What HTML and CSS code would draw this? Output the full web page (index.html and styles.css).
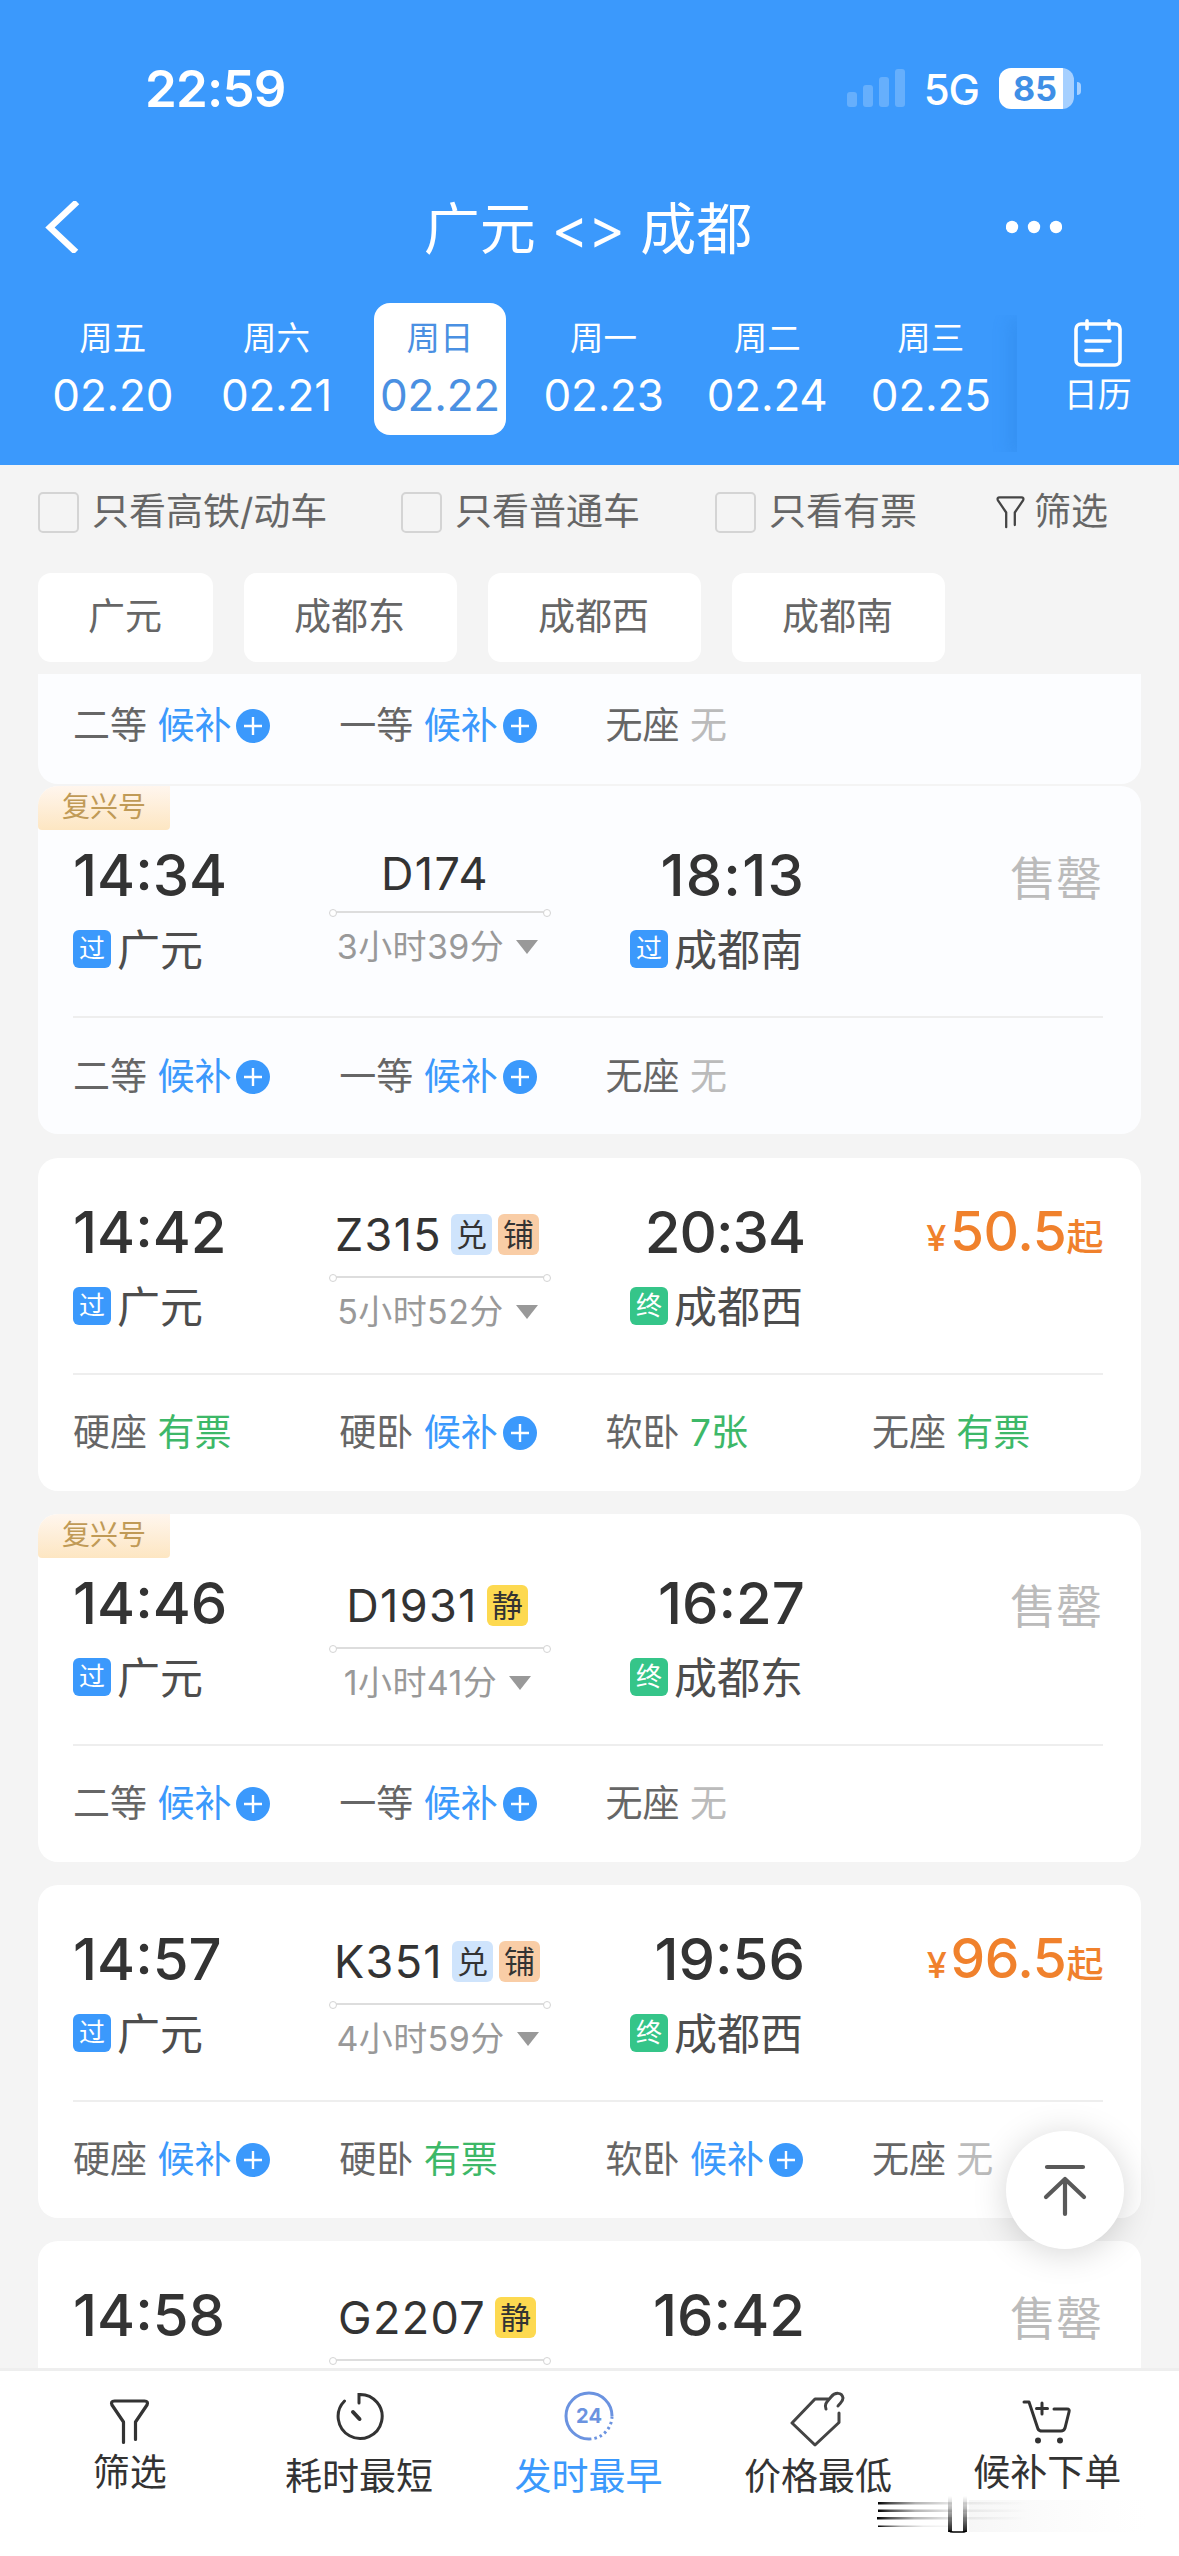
FILE: index.html
```html
<!DOCTYPE html>
<html lang="zh-CN">
<head>
<meta charset="utf-8">
<title>广元 - 成都</title>
<link rel="stylesheet" href="styles.css">
</head>
<body>
<svg class="defs" width="0" height="0">
  <symbol id="plus" viewBox="0 0 34 34"><circle cx="17" cy="17" r="17" fill="#3b99fc"/><path d="M8 17h18M17 8v18" stroke="#fff" stroke-width="2.4"/></symbol>
  <symbol id="funnel" viewBox="0 0 40 46"><path d="M14 43.500V23L2.500 6Q.8 2 5 2h30q4.200 0 2.500 4L26 23v17.500" fill="none" stroke="currentColor" stroke-width="3.200" stroke-linecap="round" stroke-linejoin="round"/></symbol>
</svg>
<div class="screen">
  <header class="header">
    <div class="status">
      <span class="clock">22:59</span>
      <div class="status-right">
        <svg class="signal" width="59" height="38" viewBox="0 0 59 38" fill="#fff" fill-opacity=".22"><rect x="0" y="23" width="10" height="15" rx="3"/><rect x="16" y="16" width="10" height="22" rx="3"/><rect x="32" y="8" width="10" height="30" rx="3"/><rect x="48" y="0" width="10" height="38" rx="3"/></svg>
        <span class="net">5G</span>
        <div class="battery"><span>85</span></div>
        <i class="nub"></i>
      </div>
    </div>
    <nav class="nav">
      <svg class="back" width="37" height="52" viewBox="0 0 37 52"><path d="M32 1 5 26.500 31 51" fill="none" stroke="#fff" stroke-width="6.500"/></svg>
      <h1>广元 <span>&lt;&gt;</span> 成都</h1>
      <svg class="more" width="56" height="14" viewBox="0 0 56 14" fill="#fff"><circle cx="6" cy="7" r="6.200"/><circle cx="28" cy="7" r="6.200"/><circle cx="50" cy="7" r="6.200"/></svg>
    </nav>
    <div class="dates">
      <div class="day"><span>周五</span><b>02.20</b></div>
      <div class="day"><span>周六</span><b>02.21</b></div>
      <div class="day on"><span>周日</span><b>02.22</b></div>
      <div class="day"><span>周一</span><b>02.23</b></div>
      <div class="day"><span>周二</span><b>02.24</b></div>
      <div class="day"><span>周三</span><b>02.25</b></div>
      <div class="calendar">
        <svg width="48" height="48" viewBox="0 0 48 48" fill="none" stroke="#fff" stroke-width="3.600" stroke-linecap="round"><rect x="2" y="5" width="44" height="41" rx="5"/><path d="M13 1.800v8M35 1.800v8M12 22h24M12 31.500h16"/></svg>
        <span>日历</span>
      </div>
    </div>
  </header>

  <section class="filters">
    <label class="opt o1"><i></i>只看高铁/动车</label>
    <label class="opt o2"><i></i>只看普通车</label>
    <label class="opt o3"><i></i>只看有票</label>
    <span class="sift"><svg width="29" height="33"><use href="#funnel"/></svg>筛选</span>
  </section>
  <section class="chips"><span>广元</span><span>成都东</span><span>成都西</span><span>成都南</span></section>

  <main class="list">
    <article class="card dim cut">
      <div class="seats">
        <div>二等 <em>候补</em><svg><use href="#plus"/></svg></div>
        <div>一等 <em>候补</em><svg><use href="#plus"/></svg></div>
        <div>无座 <s>无</s></div>
      </div>
    </article>

    <article class="card dim fx first">
      <span class="ribbon">复兴号</span>
      <div class="trip">
        <div class="dep"><time>14:34</time><p><i class="pass">过</i><span>广元</span></p></div>
        <div class="mid"><div class="no">D174</div><div class="rail"></div><div class="dur">3小时39分<i></i></div></div>
        <div class="arr"><time class="loose">18:13</time><p><i class="pass">过</i><span>成都南</span></p></div>
        <div class="sold">售罄</div>
      </div>
      <div class="seats">
        <div>二等 <em>候补</em><svg><use href="#plus"/></svg></div>
        <div>一等 <em>候补</em><svg><use href="#plus"/></svg></div>
        <div>无座 <s>无</s></div>
      </div>
    </article>

    <article class="card">
      <div class="trip">
        <div class="dep"><time>14:42</time><p><i class="pass">过</i><span>广元</span></p></div>
        <div class="mid"><div class="no tagged">Z315<i class="dui">兑</i><i class="pu">铺</i></div><div class="rail"></div><div class="dur">5小时52分<i></i></div></div>
        <div class="arr"><time class="tight">20:34</time><p><i class="end">终</i><span>成都西</span></p></div>
        <div class="price"><small>¥</small>50.5<span>起</span></div>
      </div>
      <div class="seats">
        <div>硬座 <u>有票</u></div>
        <div>硬卧 <em>候补</em><svg><use href="#plus"/></svg></div>
        <div>软卧 <u>7张</u></div>
        <div>无座 <u>有票</u></div>
      </div>
    </article>

    <article class="card fx">
      <span class="ribbon">复兴号</span>
      <div class="trip">
        <div class="dep"><time>14:46</time><p><i class="pass">过</i><span>广元</span></p></div>
        <div class="mid"><div class="no tagged">D1931<i class="jing">静</i></div><div class="rail"></div><div class="dur">1小时41分<i></i></div></div>
        <div class="arr"><time>16:27</time><p><i class="end">终</i><span>成都东</span></p></div>
        <div class="sold">售罄</div>
      </div>
      <div class="seats">
        <div>二等 <em>候补</em><svg><use href="#plus"/></svg></div>
        <div>一等 <em>候补</em><svg><use href="#plus"/></svg></div>
        <div>无座 <s>无</s></div>
      </div>
    </article>

    <article class="card">
      <div class="trip">
        <div class="dep"><time>14:57</time><p><i class="pass">过</i><span>广元</span></p></div>
        <div class="mid"><div class="no tagged">K351<i class="dui">兑</i><i class="pu">铺</i></div><div class="rail"></div><div class="dur">4小时59分<i></i></div></div>
        <div class="arr"><time>19:56</time><p><i class="end">终</i><span>成都西</span></p></div>
        <div class="price"><small>¥</small>96.5<span>起</span></div>
      </div>
      <div class="seats">
        <div>硬座 <em>候补</em><svg><use href="#plus"/></svg></div>
        <div>硬卧 <u>有票</u></div>
        <div>软卧 <em>候补</em><svg><use href="#plus"/></svg></div>
        <div>无座 <s>无</s></div>
      </div>
    </article>

    <article class="card">
      <div class="trip">
        <div class="dep"><time>14:58</time></div>
        <div class="mid"><div class="no tagged">G2207<i class="jing">静</i></div><div class="rail"></div></div>
        <div class="arr"><time>16:42</time></div>
        <div class="sold">售罄</div>
      </div>
    </article>
  </main>

  <footer class="tabs">
    <div class="tab up"><svg width="41" height="46"><use href="#funnel"/></svg><span>筛选</span></div>
    <div class="tab"><svg width="50" height="50" viewBox="0 0 50 50" fill="none" stroke="#333" stroke-width="3" stroke-linecap="round"><path d="M25 12V3.500a22 22 0 1 1-14.500 6.500"/><path d="M19 21l6.500 7" stroke-width="4"/></svg><span>耗时最短</span></div>
    <div class="tab on"><svg width="50" height="50" viewBox="0 0 50 50" fill="none" stroke="#6b93e0" stroke-width="3"><path d="M48 25A23 23 0 1 0 25 48"/><path d="M25 48A23 23 0 0 0 48 25" stroke-dasharray="2.500 3"/><text x="25" y="32" text-anchor="middle" class="n24">24</text></svg><span>发时最早</span></div>
    <div class="tab"><svg width="56" height="56" viewBox="0 0 56 56" fill="none" stroke="#444" stroke-width="3" stroke-linecap="round" stroke-linejoin="round"><path d="M38 8H25L2 32 25 54 49 31.500V22"/><path d="M36 18c-2-5 1-7 5-12 4-5 11-5 12 1 0 4-3 5-5 8"/></svg><span>价格最低</span></div>
    <div class="tab up"><svg width="50" height="46" viewBox="0 0 50 46" fill="none" stroke="#333" stroke-width="3" stroke-linecap="round" stroke-linejoin="round"><path d="M2 3h5l9 27q1 2 4 2h19q3 0 4-3l4-16q1-3-2-3H32"/><path d="M20 4v11M14.500 9.500h11"/><g fill="#333" stroke="none"><circle cx="16" cy="41.500" r="3"/><circle cx="38" cy="41.500" r="3"/></g></svg><span>候补下单</span></div>
  </footer>

  <button class="totop"><svg width="46" height="54" viewBox="0 0 46 54" fill="none" stroke="#595959" stroke-width="4.200" stroke-linecap="round" stroke-linejoin="round"><path d="M5 4h36M23 51V16M4 34 23 16l19 18"/></svg></button>
  <svg class="streaks" width="270" height="44" viewBox="0 0 270 44">
    <defs>
      <linearGradient id="h"><stop offset="0"/><stop offset=".08" stop-opacity=".7"/><stop offset=".25" stop-opacity=".3"/><stop offset=".5" stop-opacity=".08"/><stop offset="1" stop-opacity="0"/></linearGradient>
      <linearGradient id="v" x2="0" y2="1"><stop offset="0" stop-opacity="0"/><stop offset=".5" stop-opacity=".4"/><stop offset="1" stop-opacity=".9"/></linearGradient>
      <linearGradient id="g"><stop offset="0" stop-color="#ddd" stop-opacity=".25"/><stop offset="1" stop-color="#eee" stop-opacity="0"/></linearGradient>
    </defs>
    <rect x="92" y="6" width="178" height="32" fill="url(#g)"/>
    <g fill="url(#h)"><rect x="1" y="8" width="150" height="2.500"/><rect x="1" y="15.500" width="150" height="2.500"/><rect x="0" y="23" width="150" height="2.500"/><rect x="1" y="31.500" width="90" height="1.500"/></g>
    <rect x="75" y="6" width="11" height="32" fill="#fff"/>
    <rect x="71" y="2" width="4" height="36" fill="url(#v)"/><rect x="86" y="2" width="4" height="36" fill="url(#v)"/>
    <path d="M72 36.500q1 1.500 4 1.500h9q4 0 4-1.500" fill="none" stroke="#000" stroke-width="1.600"/>
  </svg>
</div>
</body>
</html>
```
FILE: styles.css
```css
* { box-sizing: border-box; margin: 0; padding: 0; }
body { width: 1179px; height: 2556px; overflow: hidden; background: #f4f4f4; }
i, em { font-style: normal; }
s, u { text-decoration: none; }
.defs { position: absolute; }
.screen {
  position: relative; display: flex; flex-direction: column;
  width: 1179px; height: 2556px;
  font-family: Inter, "Noto Sans CJK SC", sans-serif; font-size: 37px; color: #333;
}

/* header */
.header { height: 465px; flex: none; background: #3b99fc; color: #fff; }
.status { display: flex; height: 176px; align-items: center; justify-content: space-between; padding: 0 98px 0 145px; }
.clock { font-size: 51px; font-weight: 600; letter-spacing: -0.8px; }
.status-right { display: flex; align-items: center; }
.net { margin: 2px 20px 0 18px; font-size: 42px; font-weight: 500; letter-spacing: -1px; }
.battery {
  width: 75px; height: 41px; border-radius: 12px; padding-right: 3px;
  background: linear-gradient(90deg, #fff 64px, #a6d0ff 64px);
  color: #3f8fe6; font-size: 34px; font-weight: 700; line-height: 42px; text-align: center;
}
.nub { width: 4px; height: 13px; margin-left: 3px; border-radius: 0 5px 5px 0; background: #a6d0ff; }
.nav { display: flex; height: 102px; align-items: center; padding: 0 117px 0 45px; }
.nav h1 { flex: 1; margin: 4px 0 0 88px; font-size: 56px; font-weight: 400; line-height: 80px; text-align: center; white-space: pre; }
.nav h1 span { font-size: 56px; letter-spacing: -0.5px; }
.dates { display: grid; grid-template-columns: repeat(6, 163.6px) 1fr; margin-top: 25px; padding-left: 31px; }
.day { justify-self: center; width: 132px; height: 132px; padding-top: 14px; border-radius: 16px; text-align: center; }
.day span { display: block; font-size: 33.500px; line-height: 42px; }
.day b { display: block; margin: 6px -10px 0; font-size: 44px; font-weight: 400; line-height: 60px; letter-spacing: -0.2px; }
.day.on { background: #fff; color: #4a90e2; }
.calendar {
  display: flex; flex-direction: column; align-items: center; height: 137px; margin: 12px 0 0 4px; padding-top: 4px;
  box-shadow: -8px 4px 16px rgba(30, 110, 200, .18); font-size: 34px; clip-path: inset(0 0 0 -30px);
}
.calendar span { line-height: 44px; margin-top: 6px; }

/* filters */
.filters { display: flex; height: 94px; flex: none; align-items: center; padding-left: 38px; color: #666; line-height: 44px; white-space: nowrap; }
.opt { display: flex; align-items: center; }
.opt i { width: 41px; height: 41px; margin-right: 13px; border: 2px solid #d4d4d4; border-radius: 5px; }
.o1 { width: 363px; }
.o2 { width: 314px; }
.o3 { width: 281px; }
.sift { display: flex; align-items: center; gap: 9px; }
.sift svg { color: #444; }
.chips { display: flex; gap: 31px; height: 115px; flex: none; padding: 14px 38px 12px; color: #666; }
.chips span { height: 89px; padding: 0 52px 0 50px; border-radius: 13px; background: #fff; line-height: 88px; }
.chips span:first-child { padding: 0 51px 0 50px; }

/* train cards */
.list { flex: 1; min-height: 0; overflow: hidden; padding: 0 38px; }
.card { position: relative; height: 333px; margin-bottom: 23px; padding: 0 38px 0 35px; border-radius: 20px; background: #fff; overflow: hidden; }
.card.dim { background: #fcfdff; }
.card.cut { height: 110px; margin-bottom: 2px; border-radius: 0 0 20px 20px; }
.card.cut .seats { height: 102px; border: 0; }
.card.fx { height: 348px; padding-top: 15px; }
.card.first { margin-bottom: 24px; }
.ribbon {
  position: absolute; left: 0; top: 0; width: 132px; height: 44px; border-radius: 0 0 4px 4px;
  background: linear-gradient(#fff6ee, #fde6c2); color: #c09a56; font-size: 28px; line-height: 43px; text-align: center;
}
.trip { display: grid; grid-template-columns: 257px 220px 1fr 300px; height: 215px; }
.dep, .arr { padding-top: 40px; }
time { display: block; font-size: 58px; font-weight: 500; line-height: 69px; letter-spacing: 0; }
time.loose { letter-spacing: 1.2px; }
time.tight { letter-spacing: -1px; }
.dep p, .arr p { display: flex; align-items: center; margin-top: 18px; font-size: 43px; line-height: 40px; color: #4d4d4d; }
.dep p span, .arr p span { padding-top: 2px; }
.arr { justify-self: end; text-align: right; }
.arr time { margin-right: -2px; }
.arr p { justify-content: flex-end; }
.pass, .end { width: 38px; height: 38px; margin-right: 6px; border-radius: 6px; background: #3b99fc; color: #fff; font-size: 26px; line-height: 38px; text-align: center; }
.end { background: #35c589; }
.mid { padding-top: 46px; }
.no { display: flex; height: 53px; align-items: center; justify-content: center; padding-right: 10px; font-size: 45px; font-weight: 400; letter-spacing: 1.3px; }
.no.tagged { height: 61px; padding-right: 6px; }
.no i { width: 41px; height: 41px; margin-left: 6px; border-radius: 6px; font-size: 31px; line-height: 41px; letter-spacing: 0; text-align: center; }
.no i:first-child { margin-left: 9px; }
.dui { background: #cfe4fc; }
.pu { background: #f9cda6; }
.jing { background: #fdd950; }
.rail { position: relative; height: 2px; margin: 11px 0 14px; background: #ddd; }
.rail::before, .rail::after { content: ""; position: absolute; top: -2px; left: -1px; width: 6px; height: 6px; border: 1.500px solid #d4d4d4; border-radius: 50%; background: #fff; }
.rail::after { left: auto; right: -1px; }
.dur { display: flex; align-items: center; justify-content: center; padding-right: 5px; font-size: 34px; line-height: 40px; letter-spacing: 0.4px; color: #999; white-space: nowrap; }
.dur i { margin-left: 12px; border: 11px solid transparent; border-top: 14px solid #999; border-bottom: 0; }
.sold { padding: 50px 1px 0 0; font-size: 46px; line-height: 54px; text-align: right; color: #bbb; }
.price { padding-top: 39px; font-size: 55px; font-weight: 500; line-height: 68px; text-align: right; color: #f0812c; white-space: nowrap; letter-spacing: -0.4px; }
.price small { font-size: 36px; margin-right: 4px; }
.price span { font-size: 37px; }
.seats { display: grid; grid-template-columns: repeat(4, 266.300px); height: 118px; border-top: 2px solid #eee; color: #666; }
.seats div { display: flex; align-items: center; padding-bottom: 6px; white-space: pre; }
.dim .seats div { padding-bottom: 4px; }
.seats svg { width: 34px; height: 34px; margin: 5px 0 0 5px; }
.seats em { color: #3b99fc; }
.seats s { color: #bbb; }
.seats u { color: #3db868; }

/* bottom bar */
.tabs { display: flex; height: 188px; flex: none; padding: 0 17px 0 15px; border-top: 3px solid #eee; background: #fff; }
.tab { display: flex; flex: 1; flex-direction: column; align-items: center; color: #333; }
.tab svg { margin-top: 20px; }
.tab span { margin-top: auto; margin-bottom: 57px; line-height: 44px; }
.tab.up span { margin-bottom: 61px; }
.tab.up svg { margin-top: 28px; }
.tab.on { color: #3b99fc; }
.n24 { font-size: 20px; font-weight: 700; fill: #6b93e0; stroke: none; }

/* floating */
.totop {
  position: absolute; left: 1006px; top: 2131px; display: flex; align-items: center; justify-content: center;
  width: 118px; height: 118px; border: 0; border-radius: 50%; background: #fff; box-shadow: 0 4px 34px rgba(0, 0, 0, .17);
}
.streaks { position: absolute; left: 877px; top: 2494px; }
```
